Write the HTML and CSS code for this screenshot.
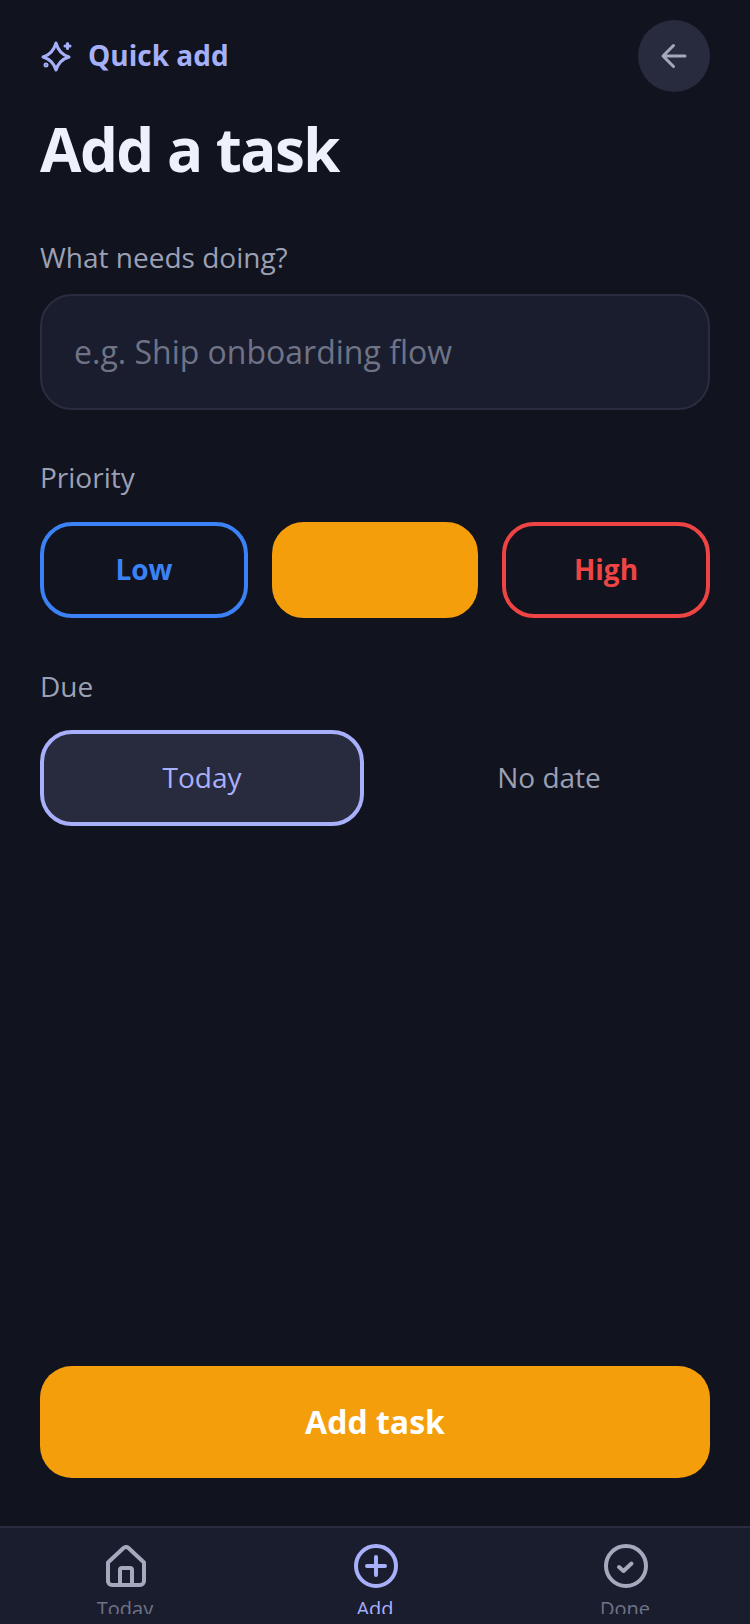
FILE: index.html
```html
<!DOCTYPE html>
<html lang="en">
  <head>
    <meta charset="UTF-8" />
    <meta name="viewport" content="width=device-width, initial-scale=1.0" />
    <title>Add a task</title>
    <link rel="stylesheet" href="styles.css">
  </head>
  <body>
    <main class="screen">
      <header class="top">
        <div class="brand">
          <svg class="brand-icon" viewBox="0 0 32 32" fill="none" stroke="currentColor" stroke-width="3" stroke-linecap="round" stroke-linejoin="round">
            <path d="M16 3Q19 14 29 17 19 20 16 30 13 20 3 17 13 14 16 3z" />
            <path d="M27.500 3.500v5M25 6h5" />
            <circle cx="6" cy="25" r="1" />
          </svg>
          <span>Quick add</span>
        </div>
        <button class="back">
          <svg viewBox="0 0 32 32" fill="none" stroke="currentColor" stroke-width="3" stroke-linecap="round" stroke-linejoin="round">
            <path d="M27 16H5.500M15.500 5.500 5 16l10.500 10.500" />
          </svg>
        </button>
      </header>

      <h1 class="title">Add a task</h1>

      <label class="label label-task">What needs doing?</label>
      <input class="task-input" placeholder="e.g. Ship onboarding flow" />

      <div class="label label-priority">Priority</div>
      <div class="choices choices-3">
        <button class="choice low">Low</button>
        <button class="choice medium"></button>
        <button class="choice high">High</button>
      </div>

      <div class="label label-due">Due</div>
      <div class="choices choices-2">
        <button class="due due-on">Today</button>
        <button class="due">No date</button>
      </div>

      <button class="submit">Add task</button>
    </main>

    <nav class="tabs">
      <div class="tabs-inner">
        <a class="tab">
          <svg viewBox="0 0 48 48" fill="none" stroke="currentColor" stroke-width="4" stroke-linecap="round" stroke-linejoin="round">
            <path d="M7 20.500 22.500 6a3.700 3.700 0 0 1 5 0L43 20.500V39a4 4 0 0 1-4 4H11a4 4 0 0 1-4-4z" />
            <path d="M19 43V28a2 2 0 0 1 2-2h8a2 2 0 0 1 2 2v15" />
          </svg>
          <span>Today</span>
        </a>
        <a class="tab tab-on">
          <svg viewBox="0 0 48 48" fill="none" stroke="currentColor" stroke-width="4" stroke-linecap="round" stroke-linejoin="round">
            <circle cx="25" cy="24" r="20" />
            <path d="M25 15v18M16 24h18" />
          </svg>
          <span>Add</span>
        </a>
        <a class="tab">
          <svg viewBox="0 0 48 48" fill="none" stroke="currentColor" stroke-width="4" stroke-linecap="round" stroke-linejoin="round">
            <circle cx="25" cy="24" r="20" />
            <path d="m18 25 4.500 4 8-7.500" />
          </svg>
          <span>Done</span>
        </a>
      </div>
    </nav>
  </body>
</html>
```

FILE: styles.css
```css
* {
  box-sizing: border-box;
}
body {
  margin: 0;
  width: 750px;
  height: 1624px;
  display: flex;
  flex-direction: column;
  overflow: hidden;
  background-color: #11131f;
  font-family: "Open Sans", sans-serif;
}
button {
  font-family: inherit;
  padding: 0;
}
.screen {
  flex: 1;
  display: flex;
  flex-direction: column;
  padding: 20px 40px 48px;
}
.top {
  display: flex;
  justify-content: space-between;
  align-items: center;
}
.brand {
  display: flex;
  align-items: center;
  gap: 16px;
  color: #a5b0f8;
  font-size: 28px;
  font-weight: 700;
}
.brand span {
  margin-bottom: 2px;
}
.brand-icon {
  width: 32px;
  height: 32px;
}
.back {
  width: 72px;
  height: 72px;
  border: 0;
  border-radius: 50%;
  background-color: #282a3e;
  color: #a6a9bd;
  display: flex;
  align-items: center;
  justify-content: center;
}
.back svg {
  width: 32px;
  height: 32px;
}
.title {
  margin: 16px 0 0;
  color: #eef0fb;
  font-size: 60px;
  line-height: 82px;
  font-weight: 700;
  letter-spacing: -1.5px;
}
.label {
  color: #9ca0b4;
  font-size: 28px;
  line-height: 36px;
}
.label-task {
  margin-top: 49px;
}
.task-input {
  margin-top: 19px;
  height: 116px;
  padding: 0 32px 2px;
  border: 2px solid #2a2d42;
  border-radius: 32px;
  background-color: #1a1d2e;
  color: #eef0fb;
  font-family: inherit;
  font-size: 32px;
}
.task-input::placeholder {
  color: #6f7386;
  opacity: 1;
}
.label-priority {
  margin-top: 49px;
}
.label-due {
  margin-top: 50px;
}
.choices {
  display: grid;
  gap: 24px;
}
.choices-3 {
  margin-top: 27px;
  grid-template-columns: 1fr 206px 1fr;
}
.choices-2 {
  margin-top: 26px;
  grid-template-columns: 324px 1fr;
}
.choice {
  height: 96px;
  padding-bottom: 2px;
  border: 4px solid transparent;
  border-radius: 32px;
  background: none;
  font-size: 28px;
  font-weight: 700;
}
.low {
  border-color: #3b82f6;
  color: #3b82f6;
}
.medium {
  border-color: #f59e0b;
  background-color: #f59e0b;
}
.high {
  border-color: #ef4444;
  color: #ef4444;
}
.due {
  height: 96px;
  padding-bottom: 2px;
  border: 4px solid transparent;
  border-radius: 32px;
  background: none;
  color: #9ca0b4;
  font-size: 28px;
}
.due-on {
  border-color: #a9b0fb;
  background-color: #282a3e;
  color: #a9b0fb;
}
.submit {
  margin-top: auto;
  height: 112px;
  padding-bottom: 2px;
  border: 0;
  border-radius: 32px;
  background-color: #f59e0b;
  color: #fff;
  font-size: 32px;
  font-weight: 700;
}
.tabs {
  height: 98px;
  border-top: 2px solid #2a2d42;
  background-color: #1a1d2e;
}
.tabs-inner {
  height: 86px;
  display: grid;
  grid-template-columns: repeat(3, 1fr);
  overflow: hidden;
}
.tab {
  display: flex;
  flex-direction: column;
  align-items: center;
  padding-top: 14px;
  color: #a6a9bd;
}
.tab svg {
  width: 48px;
  height: 48px;
  flex-shrink: 0;
}
.tab span {
  margin-top: 5px;
  color: #6f7386;
  font-size: 20px;
  line-height: 28px;
}
.tab-on {
  color: #a9b0fb;
}
.tab-on span {
  color: #a9b0fb;
}
```
